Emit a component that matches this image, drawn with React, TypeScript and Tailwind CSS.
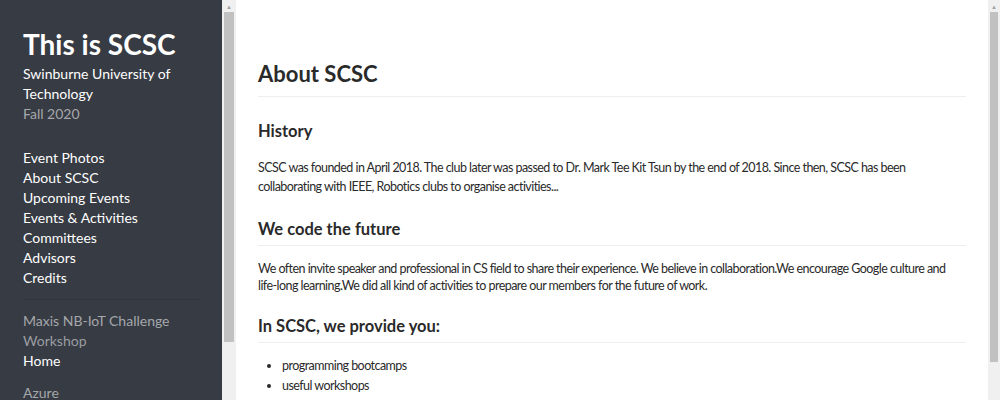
const nav = [
  "Event Photos",
  "About SCSC",
  "Upcoming Events",
  "Events & Activities",
  "Committees",
  "Advisors",
  "Credits",
];

function Scrollbar({ thumbEnd }: { thumbEnd: string }) {
  return (
    <div className="flex h-full flex-col bg-[#f0f0f0]">
      <div className="flex h-[12px] items-end justify-center pb-[2px] text-[6px] leading-none text-[#a3a3a3]">
        ▲
      </div>
      <div className={`mx-[2px] bg-[#c1c1c1] ${thumbEnd}`} />
    </div>
  );
}

export default function App() {
  return (
    <div className="flex h-[400px] w-[1000px] overflow-hidden bg-white font-['Lato',sans-serif]">
      <aside className="flex w-[222px] shrink-0 flex-col bg-[#373b43] px-[23px] pt-[26px] text-white">
        <h1 className="text-[28px] font-bold leading-[36px]">This is SCSC</h1>
        <p className="mt-[2px] text-[14px] leading-[20px]">
          Swinburne University of
          <br />
          Technology
        </p>
        <p className="text-[14px] leading-[20px] text-[#a5a7ab]">Fall 2020</p>
        <nav className="mt-[24px] flex flex-col text-[14px] leading-[20px]">
          {nav.map((n) => (
            <a key={n}>{n}</a>
          ))}
        </nav>
        <div className="mt-[11px] mb-[11px] w-[177px] border-t border-[#2f333a]" />
        <div className="flex flex-col text-[14px] leading-[20px]">
          <a className="text-[#a5a7ab]">Maxis NB-IoT Challenge</a>
          <a className="text-[#9a9da2]">Workshop</a>
          <a>Home</a>
          <a className="mt-[12px] text-[#a5a7ab]">Azure</a>
        </div>
      </aside>
      <div className="w-[14px] shrink-0">
        <Scrollbar thumbEnd="h-[330px]" />
      </div>
      <main className="flex-1 px-[22px] pt-[59px] text-[12.5px] tracking-[-0.55px] text-[#2a2a2a]">
        <h1 className="border-b border-[#eeeeee] pb-[7px] text-[22px] font-bold leading-[30px] tracking-normal">
          About SCSC
        </h1>
        <h2 className="mt-[22px] text-[16.5px] font-bold leading-[24px] tracking-normal">History</h2>
        <p className="mt-[15px] leading-[19px]">
          SCSC was founded in April 2018. The club later was passed to Dr. Mark Tee Kit Tsun by the end of
          2018. Since then, SCSC has been collaborating with IEEE, Robotics clubs to organise activities...
        </p>
        <h2 className="mt-[21px] border-b border-[#eeeeee] pb-[4px] text-[16.5px] font-bold leading-[24px] tracking-normal">
          We code the future
        </h2>
        <p className="mt-[14px] leading-[17px]">
          We often invite speaker and professional in CS field to share their experience. We believe in
          collaboration.We encourage Google culture and{" "}
          <span className="whitespace-nowrap">life-long</span> learning.We did all kind of activities to
          prepare our members for the future of work.
        </p>
        <h2 className="mt-[20px] border-b border-[#eeeeee] pb-[4px] text-[16.5px] font-bold leading-[24px] tracking-normal">
          In SCSC, we provide you:
        </h2>
        <ul className="mt-[13px] list-disc pl-[24px] leading-[20px]">
          <li>programming bootcamps</li>
          <li>useful workshops</li>
        </ul>
      </main>
      <div className="w-[12px] shrink-0">
        <Scrollbar thumbEnd="h-[350px]" />
      </div>
    </div>
  );
}
